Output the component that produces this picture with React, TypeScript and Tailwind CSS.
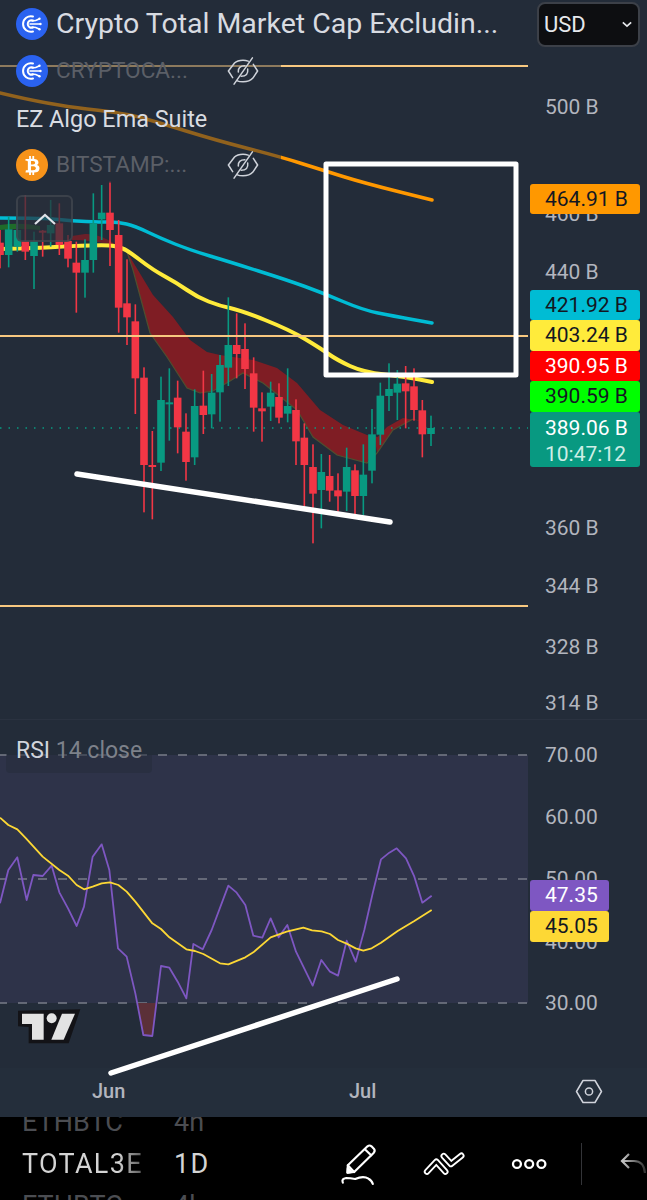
import React from "react";
import { FaBtc } from "react-icons/fa";

type C = [number, number, number, number, number, 0 | 1];
// zoom-space candles: x, wickTop, bodyTop, bodyBot, wickBot, green?
const z2: C[] = [
  [0, 150, 188, 225, 265, 0], [26, 110, 148, 225, 262, 1], [52, 120, 150, 200, 215, 1], [76, 45, 183, 215, 240, 0],
  [102, 155, 183, 228, 327, 1], [128, 150, 152, 158, 230, 0], [152, 60, 135, 160, 200, 1], [178, 70, 130, 195, 225, 0],
  [204, 165, 183, 236, 262, 0], [229, 185, 248, 278, 398, 0], [255, 178, 240, 278, 353, 1], [280, 40, 130, 240, 278, 1],
  [305, 15, 98, 118, 180, 1], [330, 5, 98, 150, 258, 0], [356, 120, 165, 383, 458, 0], [381, 238, 370, 412, 495, 0],
  [406, 373, 424, 595, 702, 0], [432, 562, 593, 855, 997, 0], [457, 753, 855, 861, 1018, 0], [483, 590, 660, 848, 873, 1],
  [508, 565, 667, 673, 782, 1], [533, 602, 653, 742, 820, 0], [558, 700, 755, 846, 902, 0], [584, 628, 678, 832, 855, 1],
  [610, 572, 677, 705, 762, 0], [635, 582, 638, 703, 745, 1],
];
const z3: C[] = [
  [0, 225, 255, 337, 425, 1], [25, 52, 195, 263, 318, 1], [50, 100, 195, 222, 295, 0], [75, 130, 207, 267, 327, 0],
  [101, 232, 280, 383, 455, 0], [126, 337, 385, 394, 485, 0], [152, 305, 338, 380, 423, 1], [177, 310, 351, 413, 430, 0],
  [203, 265, 378, 401, 427, 1], [228, 358, 390, 484, 555, 0], [253, 430, 473, 555, 678, 0], [279, 493, 561, 641, 790, 0],
  [304, 522, 576, 630, 745, 1], [329, 525, 588, 632, 665, 0], [354, 580, 631, 649, 695, 0], [380, 503, 561, 635, 693, 1],
  [405, 553, 571, 648, 703, 0], [430, 493, 584, 648, 705, 1], [456, 387, 463, 572, 610, 1], [481, 308, 347, 464, 495, 1],
  [507, 250, 327, 348, 393, 1], [532, 270, 311, 338, 420, 1], [557, 258, 310, 334, 445, 0], [582, 265, 319, 390, 422, 0],
  [607, 360, 391, 463, 532, 0], [633, 407, 444, 462, 498, 1],
];
const candles = [
  ...z2.map((c) => ({ x: c[0] / 3, wt: 180 + c[1] / 3, bt: 180 + c[2] / 3, bb: 180 + c[3] / 3, wb: 180 + c[4] / 3, g: c[5] })),
  ...z3.map((c) => ({ x: 220 + c[0] / 3, wt: 280 + c[1] / 3, bt: 280 + c[2] / 3, bb: 280 + c[3] / 3, wb: 280 + c[4] / 3, g: c[5] })),
];

function smooth(p: number[][]) {
  let d = `M${p[0][0]} ${p[0][1]}`;
  for (let i = 1; i < p.length - 1; i++) {
    const mx = (p[i][0] + p[i + 1][0]) / 2;
    const my = (p[i][1] + p[i + 1][1]) / 2;
    d += ` Q${p[i][0]} ${p[i][1]} ${mx} ${my}`;
  }
  const l = p[p.length - 1];
  return d + ` L${l[0]} ${l[1]}`;
}

const orange = [[0, 93], [50, 105], [124, 113], [157, 122], [215, 140], [281, 157], [322, 170], [364, 183], [432, 200]];
const cyan = [[0, 218], [45, 218], [72, 221], [100, 222], [118, 222], [135, 226], [160, 238], [190, 250], [230, 262], [287, 280], [323, 293], [363, 310], [393, 316], [432, 323]];
const yellow = [[0, 249], [40, 248], [70, 246], [110, 245], [118, 247], [127, 250], [153, 270], [177, 283], [197, 297], [220, 306], [240, 310], [290, 330], [320, 348], [337, 360], [363, 372], [407, 377], [432, 382]];

const ribbon = "M127 252 L153 295 L173 317 L190 340 L207 352 L220 355 L253 360 L277 368 L297 383 L320 410 L343 425 L367 435 L378 437 L367 463 L337 455 L313 437 L297 410 L263 383 L243 373 L230 381 L213 391 L200 393 L187 388 L167 357 L150 333 L133 270 Z";
const ribbon2 = "M375 440 L387 427 L403 418 L427 422 L413 419 L393 430 L377 453 Z";
const ribbonEdge = "M127 252 L133 270 L150 333 L167 357 L187 388 L200 393 L213 391 L230 381 L243 373 L263 383 L297 410 L313 437 L337 455 L367 463 L377 453 L393 430 L413 419";

const purpleZ = [[0, 520], [25, 420], [52, 382], [80, 510], [100, 435], [128, 438], [155, 407], [178, 487], [204, 535], [230, 588], [252, 530], [278, 380], [305, 343], [328, 420], [354, 655], [380, 680], [406, 790], [430, 915], [457, 918], [483, 708], [508, 713], [533, 755], [559, 805], [580, 642], [608, 658], [635, 600], [685, 467], [710, 488], [736, 525], [760, 617], [787, 623], [812, 565], [836, 622], [862, 585], [888, 665], [938, 767], [964, 690], [990, 725], [1014, 737], [1040, 632], [1067, 695], [1093, 600], [1118, 490], [1143, 388], [1168, 368], [1190, 355], [1218, 385], [1243, 440], [1267, 518], [1295, 497]];
const yellowZ = [[0, 263], [25, 285], [52, 298], [78, 325], [128, 380], [178, 420], [204, 437], [230, 465], [252, 478], [278, 470], [305, 460], [330, 457], [355, 465], [380, 485], [406, 515], [457, 580], [483, 597], [508, 622], [559, 658], [585, 663], [610, 672], [660, 700], [685, 703], [736, 682], [760, 667], [812, 622], [860, 605], [910, 593], [936, 601], [965, 604], [990, 612], [1014, 630], [1040, 641], [1067, 655], [1090, 662], [1115, 655], [1143, 638], [1193, 603], [1243, 573], [1295, 540]];
const toPts = (a: number[][]) => a.map((p) => `${p[0] / 3},${p[1] / 3 + 730 - 720}`).join(" ");

function CryptoIcon() {
  return (
    <div className="w-8 h-8 rounded-full bg-[#2a62f0] flex items-center justify-center shrink-0">
      <svg viewBox="0 0 32 32" className="w-8 h-8" fill="none" stroke="#fff" strokeWidth="2" strokeLinecap="round">
        <path d="M17 8.5 A7.8 7.8 0 1 0 17 23.5" />
        <path d="M17 12.5 A3.8 3.8 0 1 0 17 19.5" />
        <path d="M14 16 H24 M16 13 Q20 13 23 11 M16 19 Q20 19 23 21" strokeWidth="1.6" />
        <circle cx="24.5" cy="16" r="1.2" fill="#fff" stroke="none" />
        <circle cx="23.5" cy="10.8" r="1.2" fill="#fff" stroke="none" />
        <circle cx="23.5" cy="21.2" r="1.2" fill="#fff" stroke="none" />
      </svg>
    </div>
  );
}

function EyeOff() {
  return (
    <svg viewBox="0 0 34 34" className="w-8 h-8 shrink-0" fill="none" stroke="#cfd3da" strokeWidth="1.6" strokeLinecap="round" strokeLinejoin="round">
      <path d="M1.5 17 L8 8.5 Q11 5.5 17 5.5 Q20 5.5 22.5 6.5 M32.5 17 L27.5 24.5 Q24 28.5 17 28.5 Q13 28.5 11 27.5 M1.5 17 L6 24 M32.5 17 L28 10" />
      <path d="M7.5 31 L27 3" />
      <path d="M12 18 Q11.5 11.5 19 11.5 M22 15 Q23 22.5 15 22.5" />
    </svg>
  );
}

const tags = [
  { c: "top-[184px] bg-[#ff9800] text-[#131722] w-[110px] h-[30px]", t: "464.91 B" },
  { c: "top-[290px] bg-[#00bcd4] text-[#131722] w-[110px] h-[30px]", t: "421.92 B" },
  { c: "top-[320px] bg-[#ffeb3b] text-[#131722] w-[110px] h-[31px]", t: "403.24 B" },
  { c: "top-[351px] bg-[#ff0000] text-white w-[110px] h-[30px]", t: "390.95 B" },
  { c: "top-[381px] bg-[#00ff00] text-[#131722] w-[110px] h-[31px]", t: "390.59 B" },
];
const mainAxis = [
  { c: "top-[93px]", t: "500 B" }, { c: "top-[200px]", t: "460 B" }, { c: "top-[258px]", t: "440 B" },
  { c: "top-[514px]", t: "360 B" }, { c: "top-[572px]", t: "344 B" }, { c: "top-[633px]", t: "328 B" }, { c: "top-[689px]", t: "314 B" },
];
const rsiAxis = [
  { c: "top-[21px]", t: "70.00" }, { c: "top-[83px]", t: "60.00" }, { c: "top-[145px]", t: "50.00" }, { c: "top-[208px]", t: "40.00" }, { c: "top-[269px]", t: "30.00" },
];

export default function App() {
  return (
    <div className="w-[647px] h-[1200px] overflow-hidden flex flex-col bg-black font-['Roboto',sans-serif]">
      <div className="h-[1117px] flex flex-col bg-[#232c39]">
        {/* main pane */}
        <div className="relative h-[720px] flex border-b border-[#2a3240]">
          <div className="relative w-[528px] h-full">
            <svg viewBox="0 0 528 719" className="w-[528px] h-[719px]" fill="none">
              <path d="M0 225 Q20 222 40 226 L40 230 Q20 228 0 230 Z" fill="#1f6b2a" />
              <path d="M72 236 L85 234 Q100 233 118 246 L125 250 L108 244 Q90 240 72 240 Z" fill="#6b2029" />
              <path d={ribbon} fill="#7f1d24" />
              <path d={ribbon2} fill="#7f1d24" />
              <path d={ribbonEdge} stroke="#4f4f30" strokeWidth="1.2" />
              <path d={smooth(orange)} stroke="#ff9800" strokeWidth="3.5" strokeLinecap="round" />
              <path d={smooth(cyan)} stroke="#00bcd4" strokeWidth="3.5" strokeLinecap="round" />
              <path d={smooth(yellow)} stroke="#ffeb3b" strokeWidth="4" strokeLinecap="round" />
              <line x1="0" y1="428" x2="528" y2="428" stroke="#089981" strokeWidth="1.5" strokeDasharray="1.5 7" />
              {candles.map((c, i) => (
                <g key={i} fill={c.g ? "#089981" : "#f23645"}>
                  <rect x={c.x - 0.8} y={c.wt} width="1.6" height={c.wb - c.wt} />
                  <rect x={c.x - 3.8} y={c.bt} width="7.6" height={Math.max(2, c.bb - c.bt)} />
                </g>
              ))}
              <line x1="0" y1="66" x2="528" y2="66" stroke="#f7c880" strokeWidth="2" />
              <line x1="0" y1="336" x2="528" y2="336" stroke="#f7c880" strokeWidth="2" />
              <line x1="0" y1="606" x2="528" y2="606" stroke="#f7c880" strokeWidth="2" />
              <rect x="326" y="164" width="190" height="211" stroke="#fff" strokeWidth="5" strokeLinejoin="round" />
              <line x1="77" y1="474" x2="390" y2="522" stroke="#fff" strokeWidth="5.5" strokeLinecap="round" />
            </svg>
            {/* legend scrim */}
            <div className="absolute left-0 top-[50px] w-[281px] h-[133px] bg-[#232c39]/50" />
            {/* collapse button */}
            <div className="absolute left-[16px] top-[195px] w-[57px] h-[47px] rounded-md border-2 border-[#4a4e57]/60 bg-[#2a2f3a]/70 flex items-center justify-center">
              <svg viewBox="0 0 22 12" className="w-[22px] h-3" fill="none" stroke="#dfe2e8" strokeWidth="2.2"><path d="M1 11 L11 2 L21 11" /></svg>
            </div>
            {/* legend rows */}
            <div className="absolute left-[16px] top-[55px] flex items-center h-8 w-[245px]">
              <CryptoIcon />
              <span className="ml-2 w-[171px] text-[22.6px] leading-none text-[#5b5f67]">CRYPTOCA...</span>
              <EyeOff />
            </div>
            <div className="absolute left-[16px] top-[105px] text-[23.4px] leading-7 text-[#d9dce2]">EZ Algo Ema Suite</div>
            <div className="absolute left-[16px] top-[149px] flex items-center h-8 w-[245px]">
              <div className="w-8 h-8 rounded-full bg-[#f7931a] flex items-center justify-center shrink-0">
                <FaBtc className="w-[15px] h-[19px] text-white" />
              </div>
              <span className="ml-2 w-[171px] text-[22.6px] leading-none text-[#5b5f67]">BITSTAMP:...</span>
              <EyeOff />
            </div>
          </div>
          <div className="relative flex-1 h-full">
            {mainAxis.map((a) => (
              <div key={a.t} className={`absolute left-[17px] text-[21px] leading-7 text-[#b2b5be] ${a.c}`}>{a.t}</div>
            ))}
            {tags.map((t) => (
              <div key={t.t} className={`absolute left-[2px] rounded-[3px] pl-[15px] text-[21px] leading-[31px] ${t.c}`}>{t.t}</div>
            ))}
            <div className="absolute left-[2px] top-[412px] w-[110px] h-[55px] rounded-[3px] bg-[#089981] pl-[15px] pt-[3px] text-[21px] leading-[26px] text-white">
              <div>389.06 B</div>
              <div className="text-[#cdeee6]">10:47:12</div>
            </div>
          </div>
          {/* header */}
          <div className="absolute left-[16px] top-[2px] right-[7px] flex items-start">
            <div className="flex items-center h-[44px] w-[521px]">
              <CryptoIcon />
              <span className="ml-2 text-[28.5px] leading-none text-[#d8dbe1] whitespace-nowrap">Crypto Total Market Cap Excludin...</span>
            </div>
            <div className="w-[103px] h-[45px] rounded-lg border-2 border-[#3c4048] bg-[#0d0e11] flex items-center justify-between pl-[5px] pr-[6px]">
              <span className="text-[22px] leading-none text-[#e6e8ec]">USD</span>
              <svg viewBox="0 0 12 8" className="w-[10px] h-[7px]" fill="none" stroke="#e6e8ec" strokeWidth="2"><path d="M1 1.5 L6 6 L11 1.5" /></svg>
            </div>
          </div>
        </div>

        {/* RSI pane */}
        <div className="relative z-10 h-[348px] flex">
          <div className="relative w-[528px] h-full">
            <svg viewBox="0 0 528 348" className="w-[528px] h-[348px] overflow-visible" fill="none">
              <rect x="0" y="35" width="528" height="248" fill="#2e3349" />
              <line x1="0" y1="35" x2="528" y2="35" stroke="#787c88" strokeWidth="1.5" strokeDasharray="9 11" strokeDashoffset="2" />
              <line x1="0" y1="159" x2="528" y2="159" stroke="#787c88" strokeWidth="1.5" strokeDasharray="9 11" strokeDashoffset="2" />
              <line x1="0" y1="283" x2="528" y2="283" stroke="#787c88" strokeWidth="1.5" strokeDasharray="9 11" strokeDashoffset="2" />
              <polygon points="138,283 143,315 152.5,316 156,283" fill="#5b3038" />
              <polyline points={toPts(purpleZ)} stroke="#7e57c2" strokeWidth="1.8" strokeLinejoin="round" />
              <polyline points={toPts(yellowZ)} stroke="#fdd835" strokeWidth="1.8" strokeLinejoin="round" />
              <line x1="111" y1="353" x2="397" y2="259" stroke="#fff" strokeWidth="5.5" strokeLinecap="round" />
            </svg>
            <div className="absolute left-[6px] top-[14px] w-[146px] h-[39px] rounded-b bg-[#232c39]/50 pl-[10px] text-[23px] leading-[33px] text-[#d1d4dc]">
              RSI <span className="text-[#7d818a]">14 close</span>
            </div>
            <svg viewBox="50 28 192 105" className="absolute left-[17px] top-[289px] w-[64px] h-[35px]">
              <polygon points="53,33 240,29 205,131 85,131 85,82 53,80" fill="#131317" />
              <polygon points="65,42 130,42 130,120 95,120 95,73 65,73" fill="#e3e3e3" />
              <circle cx="154" cy="56" r="15" fill="#e3e3e3" />
              <polygon points="185,42 224,42 190,120 153,120" fill="#e3e3e3" />
            </svg>
          </div>
          <div className="relative flex-1 h-full">
            {rsiAxis.map((a) => (
              <div key={a.t} className={`absolute left-[17px] text-[21px] leading-7 text-[#b2b5be] ${a.c}`}>{a.t}</div>
            ))}
            <div className="absolute left-[2px] top-[160px] w-[79px] h-[31px] rounded-[3px] bg-[#7e57c2] pl-[15px] text-[21px] leading-[31px] text-white">47.35</div>
            <div className="absolute left-[2px] top-[191px] w-[79px] h-[31px] rounded-[3px] bg-[#fdd835] pl-[15px] text-[21px] leading-[31px] text-[#131722]">45.05</div>
          </div>
        </div>

        {/* time axis */}
        <div className="relative flex-1 bg-[#242e3b]">
          <span className="absolute left-[92px] top-[9px] text-[20px] leading-7 font-medium text-[#b2b5be]">Jun</span>
          <span className="absolute left-[349px] top-[9px] text-[20px] leading-7 font-medium text-[#b2b5be]">Jul</span>
          <svg viewBox="0 0 28 25" className="absolute left-[575px] top-[11px] w-7 h-[25px]" fill="none" stroke="#d1d4dc" strokeWidth="1.5" strokeLinejoin="round">
            <polygon points="1.5,12.5 8,1.5 20,1.5 26.5,12.5 20,23.5 8,23.5" />
            <circle cx="14" cy="12.5" r="3.6" />
          </svg>
        </div>
      </div>

      {/* bottom toolbar */}
      <div className="relative flex-1 flex bg-black overflow-hidden">
        <div className="w-[316px] pl-[22px] -mt-[16px] flex flex-col shrink-0">
          <div className="h-[42px] shrink-0 flex items-center text-[27px] text-[#4b4d52]"><span className="w-[152px]">ETHBTC</span><span>4h</span></div>
          <div className="h-[42px] shrink-0 flex items-center text-[27px] tracking-[1.3px]">
            <span className="w-[120px] mr-[32px] overflow-hidden whitespace-nowrap bg-gradient-to-r from-[#d4d4d4] from-80% to-[#5c5c5c] bg-clip-text text-transparent">TOTAL3E</span>
            <span className="text-[#d4d4d4]">1D</span>
          </div>
          <div className="h-[42px] shrink-0 flex items-center text-[27px] text-[#4b4d52]"><span className="w-[152px]">ETHBTC</span><span>4h</span></div>
        </div>
        <div className="flex items-center h-[83px] pt-[11px] gap-[45px] ml-[24px]">
          <svg viewBox="30 50 110 135" className="w-[37px] h-[45px] shrink-0" fill="none" stroke="#fff" strokeWidth="6.5" strokeLinecap="round" strokeLinejoin="round">
            <path d="M53 120 L112 63 Q118 58 124 63 L131 70 Q136 76 131 82 L72 140 L52 142 Z" />
            <path d="M53 120 L72 140 M104 72 L123 90" />
            <path d="M52 142 L53 128 L65 140 Z" fill="#fff" />
            <path d="M38 172 Q33 160 48 158 Q60 158 75 161 Q100 150 115 160 Q125 165 128 176" />
          </svg>
          <svg viewBox="275 78 132 78" className="w-[44px] h-[26px] shrink-0" fill="none" strokeLinecap="round" strokeLinejoin="round">
            <path d="M290 140 L318 110 L345 140" stroke="#fff" strokeWidth="19" />
            <path d="M340 93 L362 117 L393 92" stroke="#fff" strokeWidth="19" />
            <path d="M290 140 L318 110 L345 140" stroke="#000" strokeWidth="8" />
            <path d="M340 93 L362 117 L393 92" stroke="#000" strokeWidth="8" />
          </svg>
          <svg viewBox="545 100 112 36" className="w-[37px] h-3 shrink-0" fill="none" stroke="#fff" strokeWidth="7">
            <circle cx="563" cy="118" r="12" /><circle cx="600" cy="118" r="12" /><circle cx="637" cy="118" r="12" />
          </svg>
        </div>
        <div className="absolute left-[581px] top-[26px] w-[1px] h-[42px] bg-[#333438]" />
        <svg viewBox="0 0 26 22" className="absolute left-[620px] top-[36px] w-[26px] h-[22px]" fill="none" strokeWidth="2.2">
          <defs>
            <linearGradient id="undoFade" x1="0" x2="1" y1="0" y2="0">
              <stop offset="0" stopColor="#c8c8c8" />
              <stop offset="1" stopColor="#333333" />
            </linearGradient>
          </defs>
          <path d="M9 1 L2 8 L9 15 M2 8 H14 Q24 8 25 20" stroke="url(#undoFade)" />
        </svg>
      </div>
    </div>
  );
}
